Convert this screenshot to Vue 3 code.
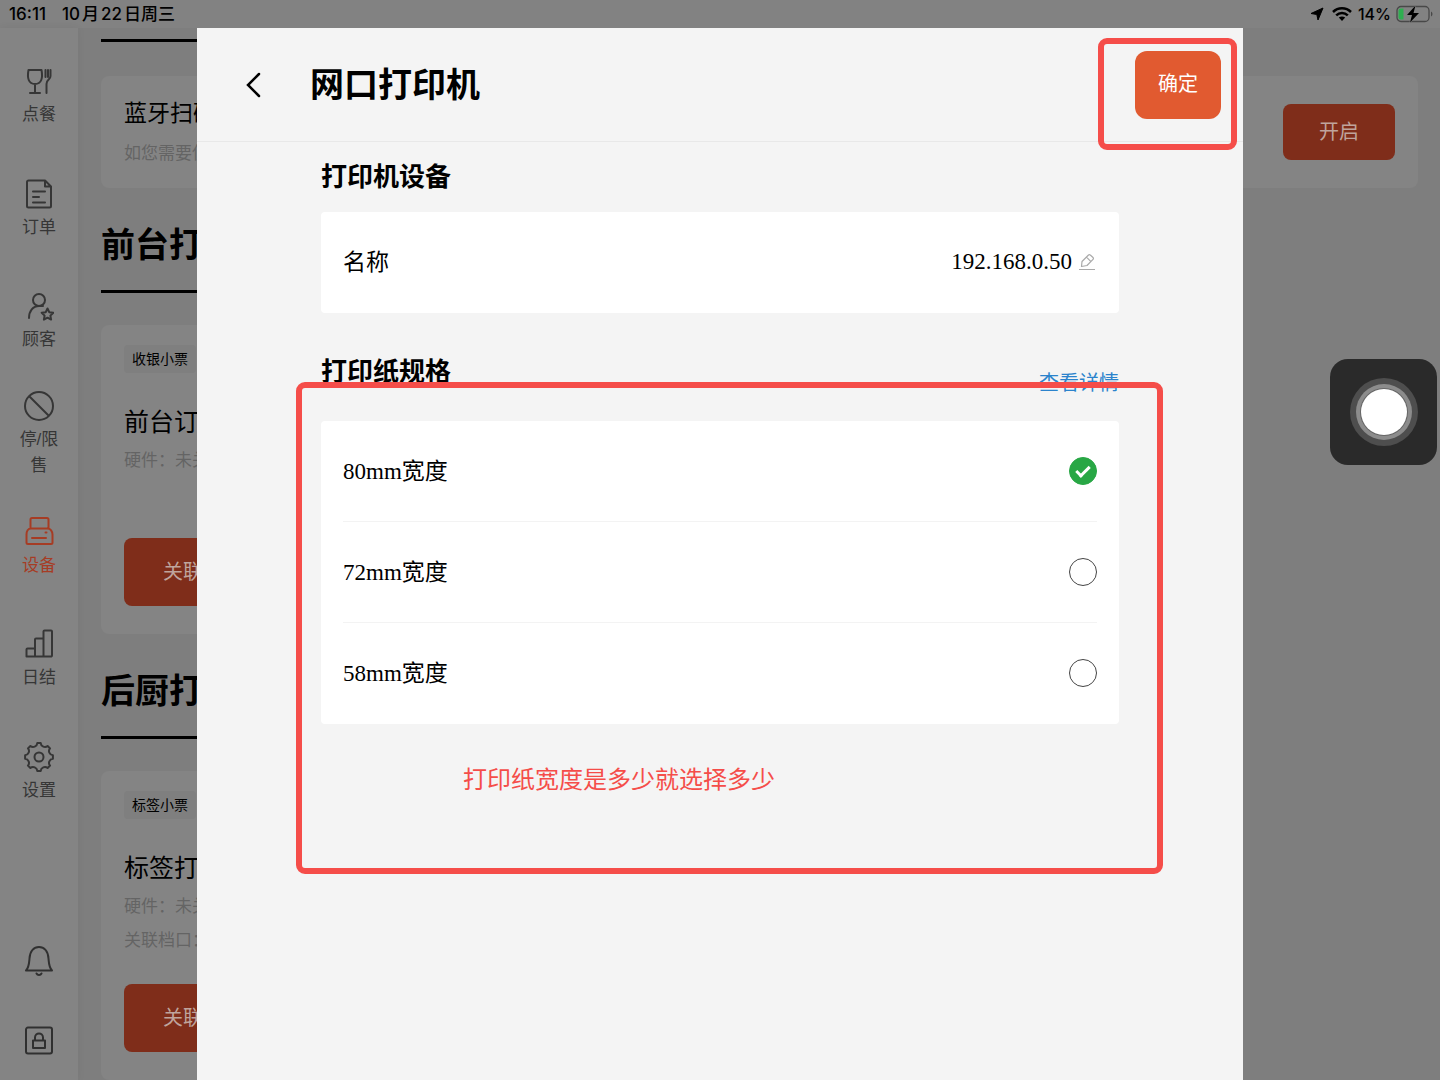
<template>
  <div class="app">
    <!-- 状态栏 -->
    <header class="status-bar">
      <span class="time">16:11</span>
      <div class="date"><span>10</span><span>月</span><span>22</span><span>日周三</span></div>
      <div class="status-right">
        <svg width="14" height="14" viewBox="0 0 14 14"><path d="M13 1L8 13 6.800 7.500 1 6.500z" fill="#000" stroke="#000" stroke-linejoin="round" /></svg>
        <svg class="wifi" width="20" height="14" viewBox="0 0 20 14" fill="none" stroke="#000" stroke-width="2.5">
          <path d="M1 5c5-5 13-5 18 0M4.200 8.400c3.400-3.300 8.200-3.300 11.600 0" />
          <path d="M6.800 10.600c2-1.600 4.400-1.600 6.400 0L10 14z" fill="#000" stroke="none" />
        </svg>
        <span>14%</span>
        <svg class="battery" width="37" height="18" viewBox="0 0 37 18">
          <rect x="1" y="1.5" width="32" height="15" rx="4" fill="none" stroke="#484848" stroke-width="1.3" />
          <path d="M4.500 3.500h3v11h-3a2 2 0 0 1-2-2v-7a2 2 0 0 1 2-2z" fill="#2fae50" />
          <path d="M35 6.500c2 1 2 4 0 5z" fill="#484848" />
          <path d="M19.500 .5L11 10h5l-2 7.500L23 8h-5.500z" fill="#000" stroke="#828282" stroke-width="1" paint-order="stroke" />
        </svg>
      </div>
    </header>

    <div class="main">
      <!-- 侧边栏 -->
      <aside class="sidebar">
        <nav class="nav">
          <a v-for="item in navItems" :key="item.label" href="#" class="nav-item" :class="{ active: item.active }">
            <svg class="icon" viewBox="0 0 30 30"><path :d="item.icon" /></svg>
            <span>{{ item.label }}</span>
          </a>
        </nav>
        <div class="side-tools">
          <button type="button" aria-label="通知">
            <svg class="icon" viewBox="0 0 30 30"><path d="M2 24.500h26c-3-3-3-6-3.500-12C24 5 20 1 15 1S6 5 5.500 12.500C5 18.500 5 21.500 2 24.500zM12.500 27.500c1 2 4 2 5 0" /></svg>
          </button>
          <button type="button" aria-label="锁定">
            <svg class="icon" viewBox="0 0 30 30"><path d="M4 1.500h22a2 2 0 0 1 2 2v22a2 2 0 0 1-2 2H4a2 2 0 0 1-2-2v-22a2 2 0 0 1 2-2zM9 14.500h12v7.500H9zM11 14.500v-3c0-5.500 8-5.500 8 0v3" /></svg>
          </button>
        </div>
      </aside>

      <!-- 设备列表 -->
      <main class="content">
        <div class="line"></div>
        <section class="card scanner">
          <div>
            <h3>蓝牙扫码</h3>
            <p>如您需要使</p>
          </div>
          <button type="button" class="dim-btn open-btn">开启</button>
        </section>

        <template v-for="group in groups" :key="group.title">
          <h2 class="group-title">{{ group.title }}</h2>
          <section class="card printer">
            <span class="tag">{{ group.tag }}</span>
            <h3>{{ group.name }}</h3>
            <div class="info">
              <p v-for="text in group.info" :key="text">{{ text }}</p>
            </div>
            <button type="button" class="dim-btn link-btn">关联</button>
          </section>
        </template>
      </main>
    </div>

    <!-- 弹窗 -->
    <div class="overlay">
      <div class="modal" role="dialog" aria-labelledby="modal-title">
        <div class="modal-header">
          <button type="button" class="back" aria-label="返回">
            <svg width="18" height="28" viewBox="0 0 18 28"><path d="M15 3L4 14l11 11" fill="none" stroke="#000" stroke-width="2.500" stroke-linecap="round" /></svg>
          </button>
          <h1 id="modal-title">网口打印机</h1>
          <button type="button" class="confirm">确定</button>
          <div class="mark mark-confirm"></div>
        </div>

        <div class="modal-body">
          <section>
            <h2>打印机设备</h2>
            <div class="panel">
              <div class="row">
                <span class="row-label">名称</span>
                <div class="name-value">
                  <span>192.168.0.50</span>
                  <button type="button" aria-label="编辑">
                    <svg width="16" height="18" viewBox="0 0 16 18" fill="none" stroke="#aaa" stroke-width="1.2" stroke-linejoin="round">
                      <path d="M3 8.500L9.500 2c.6-.6 1.200-.6 1.800 0L14 4.500c.6.600.6 1.200 0 1.800L8 12.500 2.500 13.500zM7.500 4.200l4.200 4.200M0 16.500h16" />
                    </svg>
                  </button>
                </div>
              </div>
            </div>
          </section>

          <section class="paper">
            <div class="paper-head">
              <h2>打印纸规格</h2>
              <a href="#">查看详情</a>
            </div>
            <div class="panel">
              <label v-for="size in sizes" :key="size" class="row">
                <span class="row-label">{{ size }}mm宽度</span>
                <input type="radio" name="paper" :value="size" v-model="paperSize" />
              </label>
            </div>
            <p class="tip">打印纸宽度是多少就选择多少</p>
            <div class="mark mark-paper"></div>
          </section>
        </div>
      </div>
    </div>

    <!-- 悬浮按钮 -->
    <button type="button" class="assistive" aria-label="辅助触控"><span></span></button>
  </div>
</template>

<script setup>
import { ref } from 'vue'

// 生成 8 齿的齿轮路径
const gearPath = () => {
  const point = (deg) => {
    const rad = (deg * Math.PI) / 180
    return `${(15 + 14 * Math.cos(rad)).toFixed(2)} ${(15 + 14 * Math.sin(rad)).toFixed(2)}`
  }
  let d = `M${point(-7)}`
  for (let i = 0; i < 8; i++) {
    d += `L${point(i * 45 + 7)}A4.2 4.200 0 0 0 ${point(i * 45 + 38)}`
  }
  return d + 'zM19.500 15a4.500 4.500 0 1 1-9 0a4.500 4.500 0 1 1 9 0z'
}

const navItems = [
  { label: '点餐', icon: 'M4.500 4h13c1.500 8 0 14-6.500 14S3 12 4.500 4zM11 18v9M6 27h10M21.500 4v7M24 4v7M26.500 4v6c0 4-4 3-4 8v9' },
  { label: '订单', icon: 'M4.500 1.500h16.500l6 6v19.500a1.500 1.500 0 0 1-1.500 1.500h-21a1.500 1.500 0 0 1-1.500-1.500v-24a1.500 1.500 0 0 1 1.500-1.500zM21 1.500v6h6M9 12.500h12M9 18h6M9 23.500h12' },
  { label: '顾客', icon: 'M21 9a6 6 0 1 1-12 0a6 6 0 1 1 12 0zM5 27c0-7 4-12 10-12h4M23.500 17.500l1.800 3.700 4 .6-2.900 2.800.7 4-3.600-1.900-3.600 1.900.7-4-2.900-2.800 4-.6z' },
  { label: '停/限售', icon: 'M29 15a14 14 0 1 1-28 0a14 14 0 1 1 28 0zM5.500 5.500l19 19' },
  { label: '设备', active: true, icon: 'M6.500 11.500v-9a1.500 1.500 0 0 1 1.500-1.500h15a1.500 1.500 0 0 1 1.500 1.500v9M7 11.500h16.500c3 0 5 3 5 6v8a1.500 1.500 0 0 1-1.500 1.500h-23a1.500 1.500 0 0 1-1.500-1.500v-8c0-3 1.500-6 4.500-6zM8 21h14M21.500 15.500h1' },
  { label: '日结', icon: 'M2.500 27.500v-7a1 1 0 0 1 1-1h7.500v8zM11 27.500v-17a1 1 0 0 1 1-1h7.500v18zM19.500 27.500v-25a1 1 0 0 1 1-1h6.500a1 1 0 0 1 1 1v24a1 1 0 0 1-1 1zM2.500 27.500h25' },
  { label: '设置', icon: gearPath() }
]

const groups = [
  { title: '前台打印', tag: '收银小票', name: '前台订单', info: ['硬件：未关联'] },
  { title: '后厨打印', tag: '标签小票', name: '标签打印', info: ['硬件：未关联', '关联档口：'] }
]

const sizes = [80, 72, 58]
const paperSize = ref(80)
</script>

<style>
body {
  margin: 0;
}
</style>

<style scoped>
.app {
  position: relative;
  display: flex;
  flex-direction: column;
  height: 100vh;
  overflow: hidden;
  background: #7e7e7e;
  color: #000;
  font-family: "Liberation Sans", "Noto Sans CJK SC", sans-serif;
}

h1,
h2,
h3,
p {
  margin: 0;
  font-weight: 400;
}

button {
  padding: 0;
  border: none;
  background: none;
  font-family: inherit;
  cursor: pointer;
}

a {
  text-decoration: none;
}

svg {
  display: block;
}

/* 状态栏 */
.status-bar {
  display: flex;
  align-items: center;
  flex: none;
  height: 28px;
  padding: 0 7px 0 9px;
  background: #828282;
  font-family: Inter, "Noto Sans CJK SC", sans-serif;
  font-size: 16px;
  font-weight: 500;
  line-height: 24px;
}

.time,
.date {
  font-size: 17px;
}

.date {
  display: flex;
  gap: 2px;
  margin-left: 16px;
}

.status-right {
  display: flex;
  align-items: center;
  margin-left: auto;
}

.wifi {
  margin: 0 6px 0 8px;
}

.battery {
  margin-left: 5px;
}

.main {
  display: flex;
  flex: 1;
  min-height: 0;
}

/* 侧边栏 */
.sidebar {
  display: flex;
  flex-direction: column;
  justify-content: space-between;
  align-items: center;
  flex: none;
  width: 78px;
  padding: 13px 0 24px;
  box-sizing: border-box;
  background: #848484;
  box-shadow: 0 0 8px rgba(0, 0, 0, 0.06);
}

.nav {
  display: grid;
  grid-template-rows: repeat(7, 1fr);
  height: 788px;
}

.nav-item {
  display: flex;
  flex-direction: column;
  justify-content: center;
  align-items: center;
  gap: 6px;
  width: 44px;
  color: #363636;
  font-size: 17px;
  line-height: 26px;
  text-align: center;
}

.nav-item.active {
  color: #a63c24;
}

.icon {
  width: 30px;
  height: 30px;
  fill: none;
  stroke: currentColor;
  stroke-width: 2;
  stroke-linejoin: round;
  stroke-linecap: round;
}

.side-tools {
  display: flex;
  flex-direction: column;
  gap: 50px;
}

.side-tools button {
  color: #303030;
}

/* 设备列表 */
.content {
  flex: 1;
  min-width: 0;
  padding: 11px 22px 0 23px;
}

.line {
  width: 80%;
  height: 3px;
  margin-bottom: 34px;
  background: #000;
}

.card {
  border-radius: 8px;
  background: #848484;
}

.card p {
  color: #646464;
  font-size: 17px;
  line-height: 34px;
}

.scanner {
  display: flex;
  align-items: center;
  justify-content: space-between;
  height: 112px;
  padding: 0 23px;
}

.scanner h3 {
  font-size: 23px;
  line-height: 40px;
  padding-bottom: 4px;
}

.dim-btn {
  padding-bottom: 4px;
  border-radius: 8px;
  background: #7f2d1a;
  color: #bfa49d;
  font-size: 20px;
}

.open-btn {
  width: 112px;
  height: 56px;
}

.group-title {
  width: 80%;
  padding: 34px 0 22px;
  border-bottom: 3px solid #000;
  margin-bottom: 32px;
  font-size: 34px;
  font-weight: 700;
  line-height: 46px;
}

.printer {
  display: flex;
  flex-direction: column;
  align-items: flex-start;
  width: 30%;
  padding: 20px 23px 28px;
}

.tag {
  padding: 0 8px;
  border-radius: 4px;
  background: #7f7f7f;
  font-size: 14px;
  line-height: 28px;
}

.printer h3 {
  margin-top: 31px;
  font-size: 25px;
  line-height: 36px;
}

.info {
  min-height: 70px;
  padding-top: 4px;
}

.link-btn {
  width: 160px;
  height: 68px;
  margin-top: 24px;
  padding-left: 39px;
  text-align: left;
}

/* 弹窗 */
.overlay {
  position: absolute;
  inset: 28px 197px 0;
}

.modal {
  height: 100%;
  background: #f4f4f4;
}

.modal-header {
  position: relative;
  display: flex;
  align-items: center;
  height: 113px;
  padding: 0 22px 0 47px;
  border-bottom: 1px solid #e8e8e8;
}

.modal-header h1 {
  margin-left: 48px;
  padding-bottom: 4px;
  font-size: 34px;
  font-weight: 700;
}

.confirm {
  width: 86px;
  height: 68px;
  margin-left: auto;
  padding-bottom: 4px;
  border-radius: 12px;
  background: #e15a30;
  color: #fff;
  font-size: 20px;
}

.modal-body {
  padding: 17px 124px 0;
}

.modal-body h2 {
  font-size: 26px;
  font-weight: 700;
  line-height: 36px;
}

.panel {
  margin-top: 17px;
  border-radius: 4px;
  background: #fff;
}

.row {
  display: flex;
  align-items: center;
  justify-content: space-between;
  height: 100px;
  margin: 0 22px;
  border-bottom: 1px solid #f3f3f3;
  font-family: "Liberation Serif", "Noto Sans CJK SC", serif;
  font-size: 23px;
}

.row:last-child {
  border-bottom-color: transparent;
}

.row-label {
  padding-bottom: 5px;
}

.name-value {
  display: flex;
  align-items: center;
  gap: 7px;
  padding-right: 2px;
}

.row input {
  display: grid;
  place-items: center;
  appearance: none;
  width: 28px;
  height: 28px;
  margin: 0;
  border: 1px solid #444;
  border-radius: 50%;
}

.row input:checked {
  border-color: #28a745;
  background: #28a745;
}

.row input:checked::after {
  content: "";
  width: 11px;
  height: 5px;
  margin-bottom: 3px;
  border: solid #fff;
  border-width: 0 0 3px 3px;
  transform: rotate(-45deg);
}

.paper {
  position: relative;
  margin-top: 41px;
  padding-bottom: 76px;
}

.paper-head {
  display: flex;
  justify-content: space-between;
  height: 39px;
}

.paper-head a {
  align-self: flex-end;
  color: #2b83cc;
  font-size: 20px;
  line-height: 20px;
}

.paper .panel {
  margin-top: 28px;
}

.tip {
  margin: 38px 0 0 142px;
  color: #f54d49;
  font-size: 24px;
  line-height: 36px;
}

/* 红色标注框 */
.mark {
  position: absolute;
  box-sizing: border-box;
  border: 6px solid #f54d49;
  border-radius: 9px;
  pointer-events: none;
}

.mark-confirm {
  top: 10px;
  right: 6px;
  width: 139px;
  height: 112px;
}

.mark-paper {
  inset: 28px -44px 0 -25px;
}

/* 悬浮按钮 */
.assistive {
  position: absolute;
  top: 359px;
  right: 3px;
  display: flex;
  align-items: center;
  justify-content: center;
  width: 107px;
  height: 106px;
  border-radius: 18px;
  background: #2a2a2a;
}

.assistive span {
  width: 46px;
  height: 46px;
  border-radius: 50%;
  background: #fff;
  box-shadow: 0 0 0 1px #666, 0 0 0 5px #8c8c8c, 0 0 0 11px #4e4e4e;
}
</style>
